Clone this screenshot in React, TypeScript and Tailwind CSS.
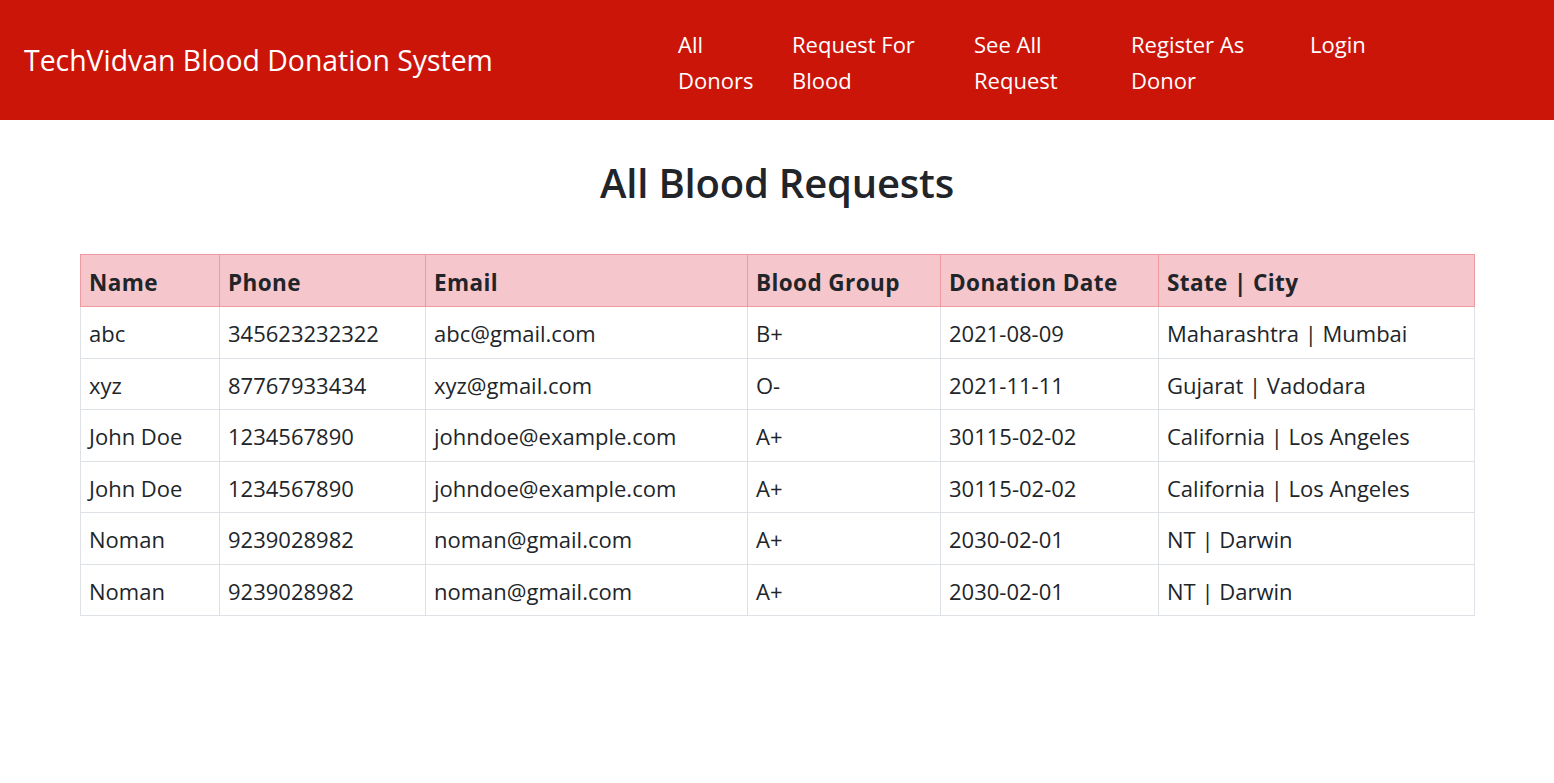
const navItems = [
  { lines: ["All", "Donors"], w: "w-[114px]" },
  { lines: ["Request For", "Blood"], w: "w-[182px]" },
  { lines: ["See All", "Request"], w: "w-[157px]" },
  { lines: ["Register As", "Donor"], w: "w-[179px]" },
  { lines: ["Login"], w: "w-[100px]" },
]

const requests = [
  { name: "abc", phone: "345623232322", email: "abc@gmail.com", group: "B+", date: "2021-08-09", place: "Maharashtra | Mumbai" },
  { name: "xyz", phone: "87767933434", email: "xyz@gmail.com", group: "O-", date: "2021-11-11", place: "Gujarat | Vadodara" },
  { name: "John Doe", phone: "1234567890", email: "johndoe@example.com", group: "A+", date: "30115-02-02", place: "California | Los Angeles" },
  { name: "John Doe", phone: "1234567890", email: "johndoe@example.com", group: "A+", date: "30115-02-02", place: "California | Los Angeles" },
  { name: "Noman", phone: "9239028982", email: "noman@gmail.com", group: "A+", date: "2030-02-01", place: "NT | Darwin" },
  { name: "Noman", phone: "9239028982", email: "noman@gmail.com", group: "A+", date: "2030-02-01", place: "NT | Darwin" },
]

const headers = ["Name", "Phone", "Email", "Blood Group", "Donation Date", "State | City"]

export default function App() {
  return (
    <div className="min-h-[783px] bg-white text-[#212529] font-['Open_Sans','Noto_Sans',sans-serif]">
      <nav className="h-[120px] bg-[#cc1509] flex items-center text-white">
        <div className="pl-[24px] w-[678px] text-[28.4px] leading-none">TechVidvan Blood Donation System</div>
        <ul className="flex self-start pt-[26px]">
          {navItems.map((item) => (
            <li key={item.lines.join(" ")} className={`${item.w} text-[22px] leading-[36px]`}>
              {item.lines.map((l) => (
                <div key={l}>{l}</div>
              ))}
            </li>
          ))}
        </ul>
      </nav>

      <h1 className="text-center text-[40px] font-semibold leading-none mt-[43px] mb-[51px] tracking-[-0.2px]">All Blood Requests</h1>

      <div className="px-[80px]">
        <table className="w-[1394px] table-fixed border-collapse text-[22px]">
          <colgroup>
            <col className="w-[139px]" />
            <col className="w-[206px]" />
            <col className="w-[322px]" />
            <col className="w-[193px]" />
            <col className="w-[218px]" />
            <col className="w-[316px]" />
          </colgroup>
          <thead>
            <tr className="bg-[#f5c6cb] h-[52px]">
              {headers.map((h) => (
                <th key={h} className="border border-[#ef9aa1] text-left font-bold px-[8px] pt-[5px] text-[22.5px] tracking-[0.4px]">
                  {h}
                </th>
              ))}
            </tr>
          </thead>
          <tbody>
            {requests.map((r, i) => (
              <tr key={i} className="h-[51.5px]">
                {[r.name, r.phone, r.email, r.group, r.date, r.place].map((v, j) => (
                  <td key={j} className="border border-[#dee2e6] px-[8px] pt-[3px] whitespace-nowrap">
                    {v}
                  </td>
                ))}
              </tr>
            ))}
          </tbody>
        </table>
      </div>
    </div>
  )
}
